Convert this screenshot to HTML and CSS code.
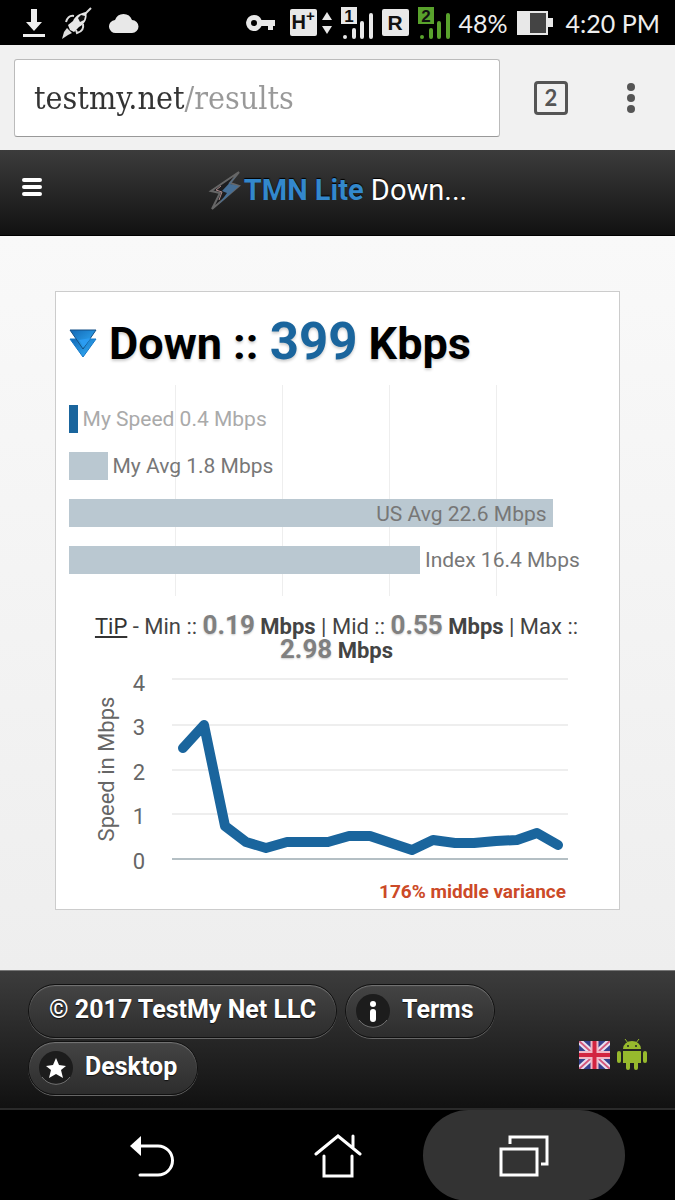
FILE: index.html
```html
<!DOCTYPE html>
<html lang="en">
<head>
  <meta charset="UTF-8">
  <meta name="viewport" content="width=device-width, initial-scale=1.0">
  <title>TMN Lite Download Results</title>
  <link rel="stylesheet" href="styles.css">
</head>
<body>
  <div class="statusbar">
    <div class="notifications">
      <svg width="22" height="30" viewBox="0 0 22 30"><path d="M8 1h6v13h5l-8 9-8-9h5z" fill="#eee"/><path d="M0 26h22v3H0z" fill="#eee"/></svg>
      <svg width="32" height="32" viewBox="0 0 32 32"><path d="M30 1L24 7" stroke="#ddd" stroke-width="2"/><path d="M25 5c-6 1-11 4-13 9l-5 4 2 5 4 2 5-5c6-3 9-9 7-15z" fill="#e8e8e8"/><path d="M17 11l3-3 4 1-1 4-4 2z" fill="#111"/><path d="M13 9c-5-1-7 3-8 6M22 17c1 5-2 8-6 9l-1-3" fill="none" stroke="#ddd" stroke-width="2"/><path d="M6 21l5 5-4 2-6 4 2-7z" fill="#ddd"/></svg>
      <svg width="30" height="22" viewBox="0 0 30 22"><path d="M7 21a6.500 6.500 0 0 1-1-13A9 9 0 0 1 23 8a6.500 6.500 0 0 1 0 13z" fill="#e8e8e8"/></svg>
    </div>
    <div class="system">
      <svg width="30" height="18" viewBox="0 0 30 18"><path fill-rule="evenodd" d="M8 1a8 8 0 0 1 7.500 5H29v6h-2v4h-5v-4h-6.500A8 8 0 1 1 8 1zm0 5a3 3 0 1 0 0 6 3 3 0 0 0 0-6z" fill="#e8e8e8"/></svg>
      <div class="data">
        <span class="chip">H<sup>+</sup></span>
        <svg width="10" height="22" viewBox="0 0 10 22"><path d="M5 0l5 8H0zM5 22l5-8H0z" fill="#e8e8e8"/></svg>
      </div>
      <svg class="signal" width="32" height="34" viewBox="0 0 32 34"><path d="M0 1h16v17H0z"/><text x="8" y="16">1</text><path class="ticks" d="M4 31v0M13 24v7M21 17v14M30 9v22"/></svg>
      <span class="chip">R</span>
      <svg class="signal green" width="32" height="34" viewBox="0 0 32 34"><path d="M0 1h16v17H0z"/><text x="8" y="16">2</text><path class="ticks" d="M4 31v0M13 24v7M21 17v14M30 9v22"/></svg>
      <span class="percent">48%</span>
      <svg width="36" height="26" viewBox="0 0 36 26"><path d="M0 1h31v7h5v9h-5v8H0z" fill="#e8e8e8"/><path d="M13 3h16v20H13z" fill="#444"/></svg>
      <span class="clock">4:20 PM</span>
    </div>
  </div>

  <div class="browser">
    <input class="address" type="text" value="testmy.net/results" aria-label="Address">
    <button class="tabs" aria-label="Open tabs">2</button>
    <button class="more" aria-label="More">
      <svg width="10" height="32" viewBox="0 0 10 32"><circle cx="5" cy="5" r="4"/><circle cx="5" cy="16" r="4"/><circle cx="5" cy="27" r="4"/></svg>
    </button>
  </div>

  <header>
    <button class="menu" aria-label="Menu">
      <svg width="20" height="18" viewBox="0 0 20 18"><path d="M2 2h16M2 9h16M2 16h16" stroke="#fff" stroke-width="4" stroke-linecap="round"/></svg>
    </button>
    <h1>
      <svg width="36" height="40" viewBox="0 0 36 40"><path d="M31 2L3 21l9 2-8 16 27-23-9-3z" fill="#1d1d1f" stroke="#666" stroke-width="2"/><path d="M29 5L14 21l5 2-8 11 20-18-9-2z" fill="#466f96"/><path d="M13 16l-5 4 6 2-3 8" fill="none" stroke="#a88" stroke-width="1"/></svg>
      <span><b>TMN Lite</b> Down...</span>
    </h1>
  </header>

  <main>
    <section class="card">
      <h2>
        <svg width="28" height="29" viewBox="0 0 28 29"><defs><linearGradient id="arrow" x1="0" x2="1" y1="0" y2="1"><stop offset="0" stop-color="#1268b4"/><stop offset="1" stop-color="#35b4ff"/></linearGradient></defs><path d="M1 10h26L14 28z" fill="url(#arrow)" stroke="#1478c8"/><path d="M1 1h26L14 20z" fill="url(#arrow)" stroke="#124f86"/><path d="M10 11l5 7 7-9z" fill="#2b9cf2"/></svg>
        <span>Down :: <strong>399</strong> Kbps</span>
      </h2>

      <div class="bars">
        <div class="row mine"><div class="bar" style="width: 1.6%"></div><span>My Speed 0.4 Mbps</span></div>
        <div class="row"><div class="bar" style="width: 7.2%"></div><span>My Avg 1.8 Mbps</span></div>
        <div class="row"><div class="bar" style="width: 90.4%"><span>US Avg 22.6 Mbps</span></div></div>
        <div class="row"><div class="bar" style="width: 65.6%"></div><span>Index 16.4 Mbps</span></div>
      </div>

      <p class="tip"><a href="#">TiP</a> - Min :: <strong>0.19</strong> <b>Mbps</b> | Mid :: <strong>0.55</strong> <b>Mbps</b> | Max :: <strong>2.98</strong> <b>Mbps</b></p>

      <svg class="chart" viewBox="0 0 535 210">
        <path class="grid" d="M103 13h396M103 59h396M103 104h396M103 148h396"/>
        <path class="axis" d="M103 193h396"/>
        <text x="70" y="25">4</text>
        <text x="70" y="69">3</text>
        <text x="70" y="114">2</text>
        <text x="70" y="158">1</text>
        <text x="70" y="203">0</text>
        <text transform="translate(45 103) rotate(-90)">Speed in Mbps</text>
        <polyline points="114,82 135,59 156,160 177,176 197,182 218,176 259,176 280,170 301,170 322,177 343,184 364,174 386,177 405,177 427,175 448,174 468,167 489,179"/>
      </svg>
      <p class="variance">176% middle variance</p>
    </section>
  </main>

  <footer>
    <div class="links">
      <a class="pill" href="#">© 2017 TestMy Net LLC</a>
      <a class="pill icon" href="#">
        <svg width="34" height="34" viewBox="0 0 34 34"><circle cx="17" cy="17" r="17" fill="#1c1c1c"/><path d="M3 26a17 17 0 0 0 28 0" fill="none" stroke="#777"/><circle cx="17" cy="10" r="3" fill="#fff"/><path d="M17 18v7" stroke="#fff" stroke-width="6" stroke-linecap="round"/></svg>
        Terms
      </a>
      <a class="pill icon" href="#">
        <svg width="34" height="34" viewBox="0 0 34 34"><circle cx="17" cy="17" r="17" fill="#1c1c1c"/><path d="M3 26a17 17 0 0 0 28 0" fill="none" stroke="#777"/><path d="M17 7l3 7 7 1-5 4 2 8-7-4-7 4 2-8-5-4 7-1z" fill="#fff"/></svg>
        Desktop
      </a>
    </div>
    <div class="badges">
      <a href="#" aria-label="English"><svg width="31" height="28" viewBox="0 0 31 28"><path d="M0 0h31v28H0z" fill="#34408c"/><path d="M0 0l31 28M31 0L0 28" stroke="#e8dff0" stroke-width="6"/><path d="M0 0l31 28M31 0L0 28" stroke="#d4587c" stroke-width="2"/><path d="M15.500 0v28M0 14h31" stroke="#f0b8c6" stroke-width="8"/><path d="M15.500 0v28M0 14h31" stroke="#d22440" stroke-width="4"/></svg></a>
      <a href="#" aria-label="Android app"><svg width="32" height="32" viewBox="0 0 32 32"><g fill="#97b92d"><path d="M7 10a9 8 0 0 1 18 0zM7 12h18v12H7z"/><rect x="1" y="12" width="4" height="12" rx="2"/><rect x="27" y="12" width="4" height="12" rx="2"/><rect x="10" y="21" width="4" height="10" rx="2"/><rect x="18" y="21" width="4" height="10" rx="2"/></g><path d="M9 0l3 4M23 0l-3 4" stroke="#97b92d"/><circle cx="12" cy="7" r="1" fill="#222"/><circle cx="20" cy="7" r="1" fill="#222"/></svg></a>
    </div>
  </footer>

  <nav>
    <button aria-label="Back"><svg width="46" height="44" viewBox="0 0 46 44"><path d="M1 12L12 2v20z" fill="#fff"/><path d="M11 12h18a14.500 14.500 0 0 1 0 29H11" fill="none" stroke="#fff" stroke-width="3" stroke-linecap="round"/></svg></button>
    <button aria-label="Home"><svg width="48" height="46" viewBox="0 0 48 46"><path d="M2 21L24 3l22 18M39 14V3M10 23v20h28V23" fill="none" stroke="#fff" stroke-width="3" stroke-linecap="round"/></svg></button>
    <button class="active" aria-label="Recent apps"><svg width="50" height="42" viewBox="0 0 50 42"><path d="M2 14h36v26H2zM11 9V2h37v27h-6" fill="none" stroke="#fff" stroke-width="3"/></svg></button>
  </nav>
</body>
</html>
```
FILE: styles.css
```css
* {
  box-sizing: border-box;
}
body {
  margin: 0;
  min-height: 100vh;
  display: flex;
  flex-direction: column;
  font-family: Roboto, Arial, sans-serif;
  background: #000;
}
svg {
  display: block;
  flex: none;
}
button {
  padding: 0;
  border: none;
  background: none;
}

/* phone status bar */
.statusbar {
  display: flex;
  justify-content: space-between;
  height: 45px;
  padding: 0 15px 0 23px;
  background: #000;
  color: #eee;
  font-family: Lato, sans-serif;
  font-size: 25px;
}
.notifications, .system, .data {
  display: flex;
  align-items: center;
}
.notifications {
  gap: 16px;
}
.system {
  gap: 9px;
}
.data {
  gap: 5px;
  margin-left: 5px;
}
.chip {
  width: 27px;
  height: 27px;
  border-radius: 2px;
  background: #e8e8e8;
  color: #111;
  font: bold 21px/27px "Liberation Sans", sans-serif;
  text-align: center;
  white-space: nowrap;
}
.chip sup {
  font-size: 15px;
  line-height: 0;
}
.data .chip {
  font-size: 20px;
}
.signal {
  fill: #e8e8e8;
  stroke: none;
}
.signal text {
  fill: #111;
  font: bold 17px "Liberation Sans", sans-serif;
  text-anchor: middle;
}
.signal .ticks {
  stroke: #e8e8e8;
  stroke-width: 4;
  stroke-linecap: round;
}
.signal.green {
  fill: #59a22c;
}
.signal.green .ticks {
  stroke: #59a22c;
}
.clock {
  margin-left: 4px;
}

/* browser bar */
.browser {
  display: flex;
  align-items: center;
  height: 105px;
  padding: 0 39px 0 14px;
  background: #f1f1f1;
}
.address {
  flex: 1;
  min-width: 0;
  height: 78px;
  padding: 0 19px;
  border: 1px solid #bbb;
  border-bottom-color: #999;
  border-radius: 3px;
  font: 32px "DejaVu Serif Condensed", "DejaVu Serif", serif;
  color: transparent;
  background:
    linear-gradient(90deg, #333 150px, #999 150px) content-box text,
    #fff;
}
.tabs {
  width: 34px;
  height: 34px;
  margin: 0 58px 0 34px;
  border: 3px solid #555;
  border-radius: 4px;
  color: #555;
  font: bold 22px/28px Lato, sans-serif;
}
.more {
  fill: #555;
}

/* page header */
header {
  display: grid;
  grid-template-columns: 60px 1fr 60px;
  align-items: center;
  height: 86px;
  padding-bottom: 6px;
  border-bottom: 1px solid #000;
  background: linear-gradient(#3c3c3c, #111);
}
.menu {
  justify-self: start;
  margin: 0 0 6px 22px;
}
h1 {
  display: flex;
  justify-content: center;
  align-items: center;
  margin: 0;
  font-size: 29px;
  font-weight: normal;
  white-space: nowrap;
  color: #fff;
  text-shadow: 0 -1px 1px #000;
}
h1 b {
  color: #3388cc;
}

/* results */
main {
  flex: 1;
  padding: 55px 55px 60px;
  background: linear-gradient(#f9f9f9, #eee);
}
.card {
  padding: 24px 15px 5px 13px;
  border: 1px solid #ccc;
  background: #fff;
}
h2 {
  display: flex;
  align-items: center;
  gap: 12px;
  margin: 0 0 15px;
  font-size: 45px;
  line-height: 52px;
  text-shadow: 0 2px 3px rgba(0,0,0,0.2);
}
h2 strong {
  font-size: 51px;
  font-weight: bold;
  color: #1a659d;
}
.bars {
  position: relative;
  display: grid;
  gap: 19px;
  padding: 20px 0 22px;
}
.bars::before {
  content: "";
  position: absolute;
  inset: 0 20% 0 0;
  background: linear-gradient(to left, #eee 1px, transparent 1px) 0 0 / 25% 100%;
}
.row {
  position: relative;
  display: flex;
  align-items: center;
  gap: 5px;
  height: 28px;
  font-size: 21px;
  line-height: 30px;
  white-space: nowrap;
  color: #777;
}
.bar {
  height: 28px;
  padding-right: 6px;
  text-align: right;
  background: #bac8d1;
}
.mine {
  color: #aaa;
}
.mine .bar {
  background: #1a659d;
}
.tip {
  margin: 18px 0 4px;
  font-size: 22px;
  line-height: 23px;
  text-align: center;
  color: #444;
}
.tip a {
  color: #333;
}
.tip strong {
  font-size: 26px;
  line-height: 22px;
  color: #808080;
  text-shadow: 0 1px 2px rgba(0,0,0,0.2);
}
.chart {
  width: 100%;
  font-size: 22px;
}
.chart text {
  fill: #666;
  text-anchor: middle;
}
.chart .grid {
  stroke: #ddd;
}
.chart .axis {
  stroke: #b4bfc4;
  stroke-width: 2;
}
.chart polyline {
  fill: none;
  stroke: #1a659d;
  stroke-width: 10;
  stroke-linecap: round;
  stroke-linejoin: round;
}
.variance {
  margin: 4px 0 0;
  padding-right: 38px;
  font-size: 19px;
  font-weight: bold;
  line-height: 24px;
  text-align: right;
  color: #cc4a28;
}

/* page footer */
footer {
  display: flex;
  justify-content: space-between;
  align-items: flex-end;
  padding: 13px 27px 13px 28px;
  border-top: 1px solid #777;
  border-bottom: 2px solid #2a2a2a;
  background: linear-gradient(#3c3c3c, #111);
}
.links {
  display: flex;
  flex-wrap: wrap;
  gap: 3px 8px;
}
.pill {
  display: flex;
  align-items: center;
  height: 54px;
  padding: 0 20px 4px;
  border: 1px solid #111;
  border-radius: 27px;
  background: linear-gradient(#444, #2d2d2d);
  box-shadow: inset 0 1px 1px #777, 0 1px 0 #666;
  font-size: 25px;
  font-weight: bold;
  white-space: nowrap;
  color: #fff;
  text-decoration: none;
  text-shadow: 0 1px 1px #111;
}
.icon {
  gap: 12px;
  padding-left: 10px;
}
.icon svg {
  margin-top: 4px;
}
.badges {
  display: flex;
  align-items: center;
  gap: 6px;
  margin-bottom: 24px;
}

/* phone navigation keys */
nav {
  display: flex;
  justify-content: center;
  height: 91px;
  background: #000;
}
nav button {
  display: flex;
  justify-content: center;
  align-items: center;
  width: 202px;
  margin: 0 -8px;
}
nav .active {
  border-radius: 80px;
  background: #333;
}
```
